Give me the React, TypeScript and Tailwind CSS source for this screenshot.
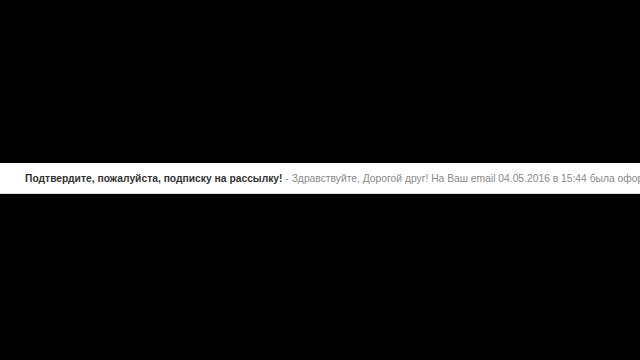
export default function App() {
  return (
    <div className="w-[640px] h-[360px] bg-black flex flex-col overflow-hidden" style={{ fontFamily: '"Liberation Sans", Arial, sans-serif' }}>
      <div className="h-[163px] shrink-0" />
      <div className="h-[31px] shrink-0 bg-white border-b border-[#d8d8d8] flex items-center pl-[25px] pt-[1px] whitespace-nowrap overflow-hidden text-[10.3px]">
        <span className="font-bold text-[#333333]">Подтвердите, пожалуйста, подписку на рассылку!</span>
        <span className="text-[#8a8a8a]">&nbsp;- Здравствуйте, Дорогой друг! На Ваш email 04.05.2016 в 15:44 была оформлена подписка</span>
      </div>
      <div className="flex-1" />
    </div>
  );
}
